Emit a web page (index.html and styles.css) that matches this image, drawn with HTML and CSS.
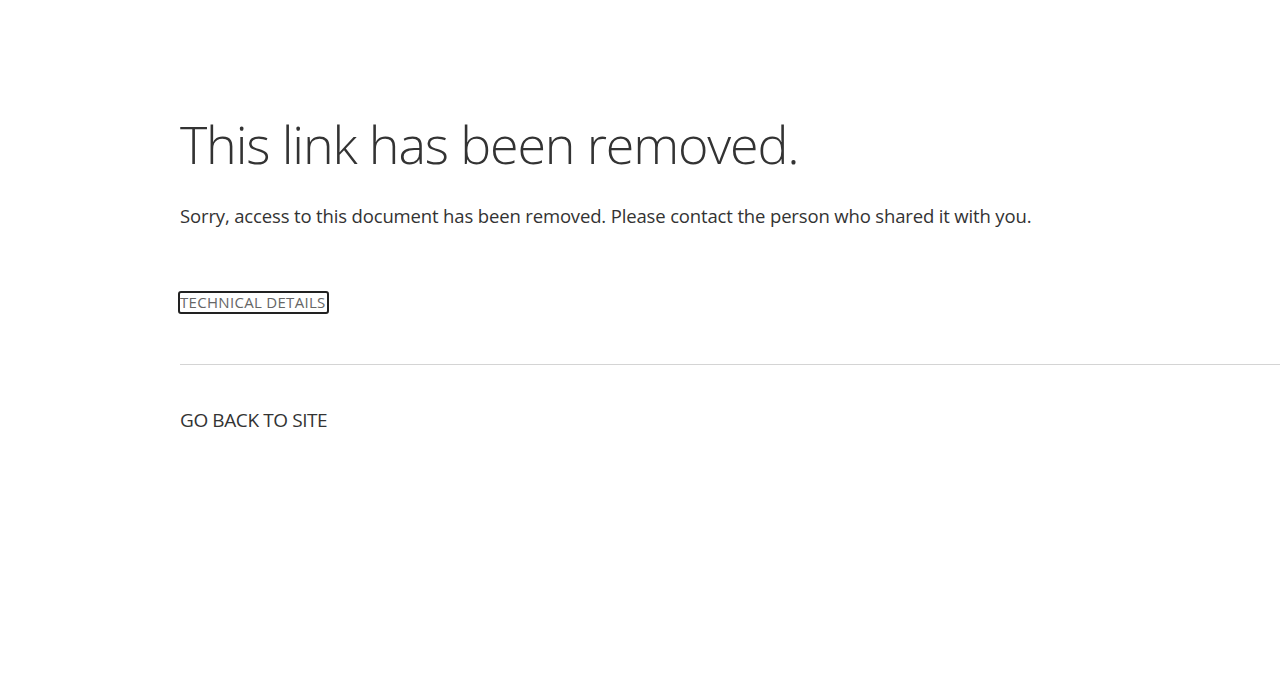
FILE: index.html
```html
<!DOCTYPE html>
<html lang="en">
<head>
<meta charset="utf-8">
<title>This link has been removed.</title>
<link rel="stylesheet" href="styles.css">
</head>
<body>
<main class="page">
  <h1 class="title">This link has been removed.</h1>
  <p class="message">Sorry, access to this document has been removed. Please contact the person who shared it with you.</p>
  <div class="details-row">
    <button class="details">TECHNICAL DETAILS</button>
  </div>
  <hr class="divider">
  <a class="back" href="#">GO BACK TO SITE</a>
</main>
</body>
</html>
```
FILE: styles.css
```css
html, body {
  margin: 0;
  padding: 0;
  background: #ffffff;
}
body {
  font-family: "Open Sans", "Noto Sans", "Liberation Sans", sans-serif;
  color: #333333;
}
.page {
  display: flex;
  flex-direction: column;
  align-items: flex-start;
  padding: 108px 0 0 180px;
}
.title {
  margin: 0;
  font-size: 52px;
  font-weight: 300;
  line-height: 72px;
  color: #333333;
  letter-spacing: -1.15px;
}
.message {
  margin: 24px 0 0 0;
  font-size: 18.5px;
  line-height: 24px;
  color: #333333;
  letter-spacing: -0.15px;
}
.details-row {
  margin-top: 63px;
}
.details {
  box-sizing: border-box;
  height: 23px;
  font-family: inherit;
  font-size: 15px;
  line-height: 19px;
  color: #666666;
  background: transparent;
  border: 2px solid #222222;
  border-radius: 3px;
  padding: 0 1px 0 0;
  margin: 0 0 0 -2px;
  letter-spacing: 0.3px;
  cursor: pointer;
}
.divider {
  align-self: stretch;
  border: 0;
  border-top: 1px solid #d4d4d4;
  margin: 50px 0 0 0;
  height: 0;
}
.back {
  margin-top: 43px;
  font-size: 19px;
  line-height: 24px;
  color: #333333;
  text-decoration: none;
  letter-spacing: -0.4px;
}
```
